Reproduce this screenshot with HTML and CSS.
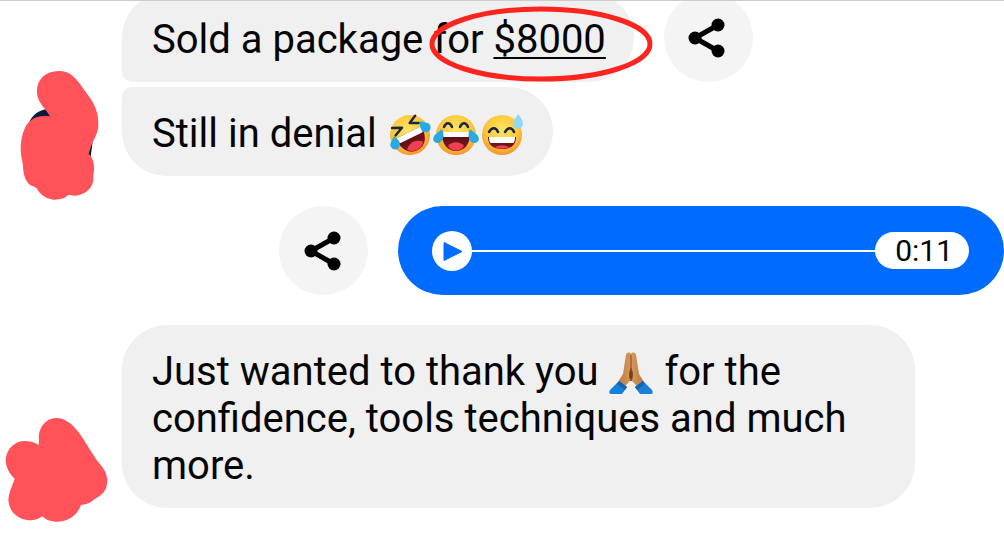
FILE: index.html
```html
<!DOCTYPE html>
<html lang="en">
<head>
    <meta charset="UTF-8">
    <meta name="viewport" content="width=device-width, initial-scale=1.0">
    <title>Chat</title>
    <link rel="stylesheet" href="styles.css">
</head>
<body>
    <svg class="defs" width="0" height="0" aria-hidden="true">
        <defs>
            <radialGradient id="face" cx="50%" cy="38%" r="66%">
                <stop offset="0" stop-color="#ffe566"/>
                <stop offset="0.6" stop-color="#fdc93a"/>
                <stop offset="1" stop-color="#f58a2a"/>
            </radialGradient>
            <linearGradient id="mouth" x1="0" y1="0" x2="0" y2="1">
                <stop offset="0" stop-color="#4a0d12"/>
                <stop offset="1" stop-color="#8e1720"/>
            </linearGradient>
            <linearGradient id="skin" x1="0" y1="0" x2="1" y2="0">
                <stop offset="0" stop-color="#b97840"/>
                <stop offset="0.5" stop-color="#d79a5c"/>
                <stop offset="1" stop-color="#b97840"/>
            </linearGradient>
            <symbol id="share" viewBox="1 0 40 40">
                <path d="M31 7 8 20l23 13" fill="none" stroke="#000" stroke-width="5"/>
                <circle cx="31" cy="7" r="6.5"/>
                <circle cx="8" cy="20" r="6.5"/>
                <circle cx="31" cy="33" r="6.5"/>
            </symbol>
        </defs>
    </svg>

    <main class="chat">
        <div class="row first">
            <div class="avatar"></div>
            <div class="bubble top">Sold a package for <a class="amount" href="#">$8000<svg class="ring" viewBox="0 0 224 76" aria-hidden="true"><ellipse cx="112" cy="38" rx="109" ry="35" fill="none" stroke="#fc241f" stroke-width="5"/></svg></a></div>
            <button class="share" aria-label="Share"><svg><use href="#share"/></svg></button>
        </div>

        <div class="row second">
            <div class="avatar">
                <svg class="blob high" viewBox="0 0 390 450" aria-hidden="true">
                    <path d="M78 210C90 170 112 152 137 148L156 172 120 190ZM262 280 278 245 272 290Z" fill="#0d1a3c"/>
                    <path d="M176 33C205 32 222 48 240 72L270 114C288 140 296 165 295 195C294 225 278 240 272 262L266 281C280 296 283 312 282 330C280 342 280 350 280 360C276 390 250 407 222 407C214 407 212 403 204 406C194 416 178 420 160 419C136 416 120 403 110 385C104 378 96 380 86 371C70 355 70 330 68 310C62 285 60 262 64 240C70 204 85 178 112 171C125 167 137 168 150 169L136 148C118 128 110 112 111 90C112 58 136 34 176 33Z" fill="#ff5359"/>
                </svg>
            </div>
            <div class="bubble bottom">Still in denial <svg class="emoji" viewBox="0 0 46 46" role="img" aria-label="rolling on the floor laughing">
                    <g transform="rotate(-26 23 23)">
                        <circle cx="23" cy="23" r="20" fill="url(#face)"/>
                        <path d="M10 9l9 4-9 4M36 8l-8 4 8 4" fill="none" stroke="#1d2740" stroke-width="2.5" stroke-linecap="round" stroke-linejoin="round"/>
                        <path d="M9 20h28c1 12-5 20-14 20S8 32 9 20z" fill="url(#mouth)"/>
                        <path d="M9 20h28c0 4-1 6-2 6H11c-1 0-2-2-2-6z" fill="#fff"/>
                        <path d="M14 35c5-6 13-6 18 0-4 6-14 6-18 0z" fill="#ee4253"/>
                        <path d="M8 17c4 6 3 12-2 13-6 0-7-7-3-9zM38 15c-4 6-3 12 2 13 6 0 7-7 3-9z" fill="#29a9e3"/>
                    </g>
                </svg><svg class="emoji" viewBox="0 0 46 46" role="img" aria-label="tears of joy">
                    <circle cx="23" cy="23" r="20" fill="url(#face)"/>
                    <path d="M11 15c2-5 6-5 8 0M27 15c2-5 6-5 8 0" fill="none" stroke="#1d2740" stroke-width="2.5" stroke-linecap="round"/>
                    <path d="M9 20h28c1 11-5 19-14 19S8 31 9 20z" fill="url(#mouth)"/>
                    <path d="M9 20h28c0 3-1 5-2 5H11c-1 0-2-2-2-5z" fill="#fff"/>
                    <path d="M15 34c4-5 12-5 16 0-4 6-12 6-16 0z" fill="#ee4253"/>
                    <path d="M9 17c3 6 1 14-4 14-6 0-6-6-2-9zM37 17c-3 6-1 14 4 14 6 0 6-6 2-9z" fill="#29a9e3"/>
                </svg><svg class="emoji" viewBox="0 0 46 46" role="img" aria-label="grinning with sweat">
                    <circle cx="23" cy="23" r="20" fill="url(#face)"/>
                    <path d="M10 20c3-5 7-5 9 0M26 20c3-5 7-5 9 0" fill="none" stroke="#1d2740" stroke-width="2.5" stroke-linecap="round" stroke-linejoin="round"/>
                    <path d="M9 25h28c0 8-5 12-14 12S9 33 9 25z" fill="url(#mouth)"/>
                    <path d="M10 25h26c0 4-1 6-2 6H12c-1 0-2-2-2-6z" fill="#fff"/>
                    <path d="M16 35c4-2 10-2 14 0-4 2-10 2-14 0z" fill="#ee4253"/>
                    <path d="M39 2c4 5 5 7 5 10 0 6-10 6-10 0 0-3 3-6 5-10z" fill="#8fd9f2"/>
                </svg></div>
        </div>

        <div class="row sent">
            <button class="share" aria-label="Share"><svg><use href="#share"/></svg></button>
            <div class="audio">
                <button class="play" aria-label="Play">
                    <svg viewBox="0 0 40 40"><path d="M12 11.500v18l18-9z" fill="#006cff" stroke="#006cff" stroke-width="1" stroke-linejoin="round"/></svg>
                </button>
                <div class="track"></div>
                <span class="time">0:11</span>
            </div>
        </div>

        <div class="row last">
            <div class="avatar">
                <svg class="blob low" viewBox="0 0 390 381" aria-hidden="true">
                    <path d="M168 24C196 24 218 43 236 67C256 94 270 122 290 150C306 170 320 184 322 210C321 226 320 236 310 248C296 262 288 262 276 274C262 282 256 284 243 285C232 316 204 336 168 335C150 334 138 330 127 319C112 330 98 332 82 330C52 326 28 306 25 270C28 240 36 230 44 206C28 190 16 170 17 148C20 116 44 93 75 93C96 94 104 98 116 105C118 90 114 76 120 61C128 38 146 25 168 24Z" fill="#ff5359"/>
                </svg>
            </div>
            <div class="bubble">Just wanted to thank you <svg class="emoji" viewBox="0 0 46 46" role="img" aria-label="folded hands">
                    <path d="M18 5c1-3 4-3 5-1 1-2 4-2 5 1l3 19 5 8-6 5-7-7-7 7-6-5 5-8z" fill="url(#skin)"/>
                    <path d="M23 5v13M23 18c-2 5-2 9 0 13 2-4 2-8 0-13z" fill="#6d3f1d" stroke="#7d4a24" stroke-width="1"/>
                    <path d="M11 31l8 6-5 7H3c-2 0-2-2-1-4z" fill="#1680dc"/>
                    <path d="M35 31l-8 6 5 7h11c2 0 2-2 1-4z" fill="#1680dc"/>
                    <path d="M11 31l8 6-2 3-8-6zM35 31l-8 6 2 3 8-6z" fill="#1464b0"/>
                </svg> for the confidence, tools techniques and much more.</div>
        </div>
    </main>
</body>
</html>
```
FILE: styles.css
```css
* {
    box-sizing: border-box;
}
body {
    margin: 0;
    background: #fff;
    color: #050505;
    font-family: Roboto, Arial, sans-serif;
    font-size: 40px;
    line-height: 47px;
}
.defs {
    display: block;
}
.chat {
    overflow: hidden;
    border-top: 1px solid #ccc;
    padding-bottom: 30px;
}
.row {
    display: flex;
    align-items: flex-start;
}
/* first message is partly scrolled out of view */
.first {
    margin-top: -8px;
}
.second {
    margin-top: 5px;
}
.sent {
    justify-content: flex-end;
    margin-top: 30px;
}
.last {
    margin-top: 30px;
}
.avatar {
    position: relative;
    flex: 0 0 122px;
}
.blob {
    position: absolute;
    left: 0;
    width: 130px;
}
.high {
    top: -27px;
}
.low {
    top: 85px;
}
.bubble {
    max-width: 793px;
    padding: 23px 28px 19px 30px;
    background: #f0f0f0;
    border-radius: 45px;
}
.top {
    border-bottom-left-radius: 10px;
}
.bottom {
    border-top-left-radius: 10px;
}
.amount {
    position: relative;
    display: inline-block;
    color: inherit;
    text-decoration: underline;
    text-decoration-thickness: 2px;
    text-underline-offset: 4px;
}
.ring {
    position: absolute;
    left: -64px;
    top: -10px;
    width: 224px;
    height: 76px;
}
.emoji {
    width: 46px;
    height: 46px;
    margin: -6px 0;
    vertical-align: -5px;
}
button {
    display: flex;
    align-items: center;
    justify-content: center;
    flex: none;
    padding: 0;
    border: none;
    border-radius: 50%;
    cursor: pointer;
}
.share {
    width: 89px;
    height: 89px;
    margin: 0 30px;
    background: #f4f4f4;
}
.share svg {
    width: 40px;
    height: 40px;
}
.audio {
    display: flex;
    align-items: center;
    flex: 0 1 606px;
    height: 89px;
    padding: 0 35px 0 34px;
    background: #006cff;
    border-radius: 45px;
}
.play {
    width: 40px;
    height: 40px;
    background: #fff;
}
.track {
    flex: 1;
    height: 2px;
    background: #fff;
}
.time {
    padding: 0 16px 0 20px;
    background: #fff;
    border-radius: 19px;
    font-size: 30px;
    line-height: 37px;
}
```
